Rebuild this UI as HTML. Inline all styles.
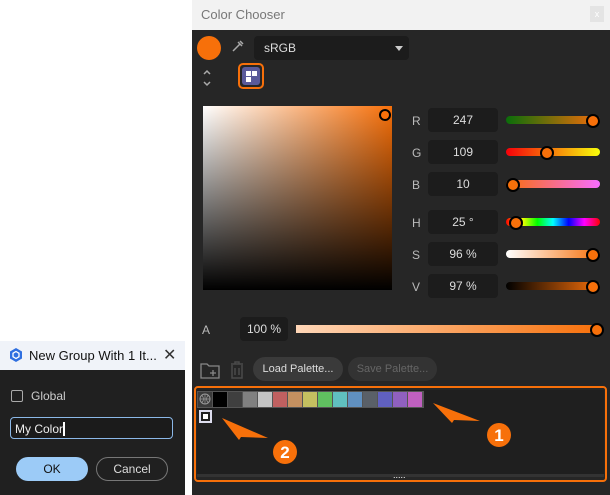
<!DOCTYPE html><html><head><style>
body{margin:0;width:610px;height:495px;background:#fff;position:relative;overflow:hidden;font-family:"Liberation Sans",sans-serif;}
.a{position:absolute}
.in{position:absolute;background:#1c1c1c;border-radius:4px;color:#ddd;font-size:12px;text-align:center;line-height:24px;height:24px}
.lb{position:absolute;color:#bbb;font-size:12px}
.sl{position:absolute;height:8px;border-radius:4px}
.kn{position:absolute;width:10px;height:10px;border-radius:50%;background:#f7700a;border:2px solid #000}
.sw{position:absolute;top:392px;width:14px;height:15px}
</style></head><body>
<div class="a" style="left:192px;top:0;width:418px;height:495px;background:#262626"></div>
<div class="a" style="left:192px;top:0;width:418px;height:30px;background:#f2f2f2;color:#777;font-size:13px;line-height:30px;text-indent:9px">Color Chooser</div>
<div class="a" style="left:590px;top:6px;width:14px;height:16px;background:#e4e4e4;color:#fff;font-size:9px;text-align:center;line-height:16px">x</div>
<div class="a" style="left:197px;top:36px;width:24px;height:24px;border-radius:50%;background:#f7700a"></div>
<svg class="a" style="left:230px;top:38px" width="16" height="16"><path d="M3 13 L10 6 M8 4 L12 8 M10 3 L13 6" stroke="#aaa" stroke-width="1.5" fill="none"/></svg>
<div class="a" style="left:254px;top:36px;width:155px;height:24px;background:#1c1c1c;border-radius:4px;color:#ddd;font-size:12px;line-height:24px;text-indent:10px">sRGB</div>
<div class="a" style="left:395px;top:46px;border:4px solid transparent;border-top:5px solid #ccc"></div>
<svg class="a" style="left:201px;top:69px" width="12" height="18"><path d="M3 5 L6 2 L9 5 M3 13 L6 16 L9 13" stroke="#aaa" stroke-width="1.5" fill="none"/></svg>
<div class="a" style="left:238px;top:63px;width:26px;height:26px;border:2px solid #f7700a;border-radius:5px;box-sizing:border-box"></div>
<div class="a" style="left:242px;top:67px;width:18px;height:18px;background:#5a5a9a;border-radius:3px"></div>
<div class="a" style="left:246px;top:71px;width:5px;height:5px;background:#fff"></div><div class="a" style="left:252px;top:71px;width:5px;height:5px;background:#fff"></div><div class="a" style="left:246px;top:77px;width:5px;height:5px;background:#fff"></div>
<div class="a" style="left:203px;top:106px;width:189px;height:184px;background:linear-gradient(to bottom,transparent,#000),linear-gradient(to right,#fff,#f7700a)"></div>
<div class="a" style="left:379px;top:109px;width:8px;height:8px;border-radius:50%;border:2px solid #000;background:#f7700a"></div>
<div class="lb" style="left:412px;top:114px">R</div><div class="in" style="left:428px;top:108px;width:70px">247</div>
<div class="sl" style="left:506px;top:116px;width:94px;background:linear-gradient(to right,#0a6d0a,#f76d0a)"></div><div class="kn" style="left:586px;top:114px"></div>
<div class="lb" style="left:412px;top:146px">G</div><div class="in" style="left:428px;top:140px;width:70px">109</div>
<div class="sl" style="left:506px;top:148px;width:94px;background:linear-gradient(to right,#f7000a,#f7ff0a)"></div><div class="kn" style="left:540px;top:146px"></div>
<div class="lb" style="left:412px;top:178px">B</div><div class="in" style="left:428px;top:172px;width:70px">10</div>
<div class="sl" style="left:506px;top:180px;width:94px;background:linear-gradient(to right,#f76d0a,#f76dff)"></div><div class="kn" style="left:506px;top:178px"></div>
<div class="lb" style="left:412px;top:216px">H</div><div class="in" style="left:428px;top:210px;width:70px">25 °</div>
<div class="sl" style="left:506px;top:218px;width:94px;background:linear-gradient(to right,red,#ff0,#0f0,#0ff,#00f,#f0f,red)"></div><div class="kn" style="left:509px;top:216px"></div>
<div class="lb" style="left:412px;top:248px">S</div><div class="in" style="left:428px;top:242px;width:70px">96 %</div>
<div class="sl" style="left:506px;top:250px;width:94px;background:linear-gradient(to right,#fff,#f7700a)"></div><div class="kn" style="left:586px;top:248px"></div>
<div class="lb" style="left:412px;top:280px">V</div><div class="in" style="left:428px;top:274px;width:70px">97 %</div>
<div class="sl" style="left:506px;top:282px;width:94px;background:linear-gradient(to right,#000,#f7700a)"></div><div class="kn" style="left:586px;top:280px"></div>
<div class="lb" style="left:202px;top:323px">A</div><div class="in" style="left:240px;top:317px;width:48px">100 %</div>
<div class="sl" style="left:296px;top:325px;width:304px;border-radius:0;background:linear-gradient(to right,#ffd7b8,#f7700a)"></div><div class="kn" style="left:590px;top:323px"></div>
<svg class="a" style="left:199px;top:360px" width="22" height="20"><path d="M2 4 H8 L10 6 H20 V18 H2 Z" stroke="#888" stroke-width="1.3" fill="none"/><path d="M14 10 V16 M11 13 H17" stroke="#888" stroke-width="1.3"/></svg>
<svg class="a" style="left:229px;top:361px" width="16" height="18"><path d="M2 3 H14 M6 3 V1 H10 V3 M3 4 V17 H13 V4 M6 7 V14 M10 7 V14" stroke="#4a4a4a" stroke-width="1.5" fill="none"/></svg>
<div class="a" style="left:253px;top:357px;width:90px;height:24px;border-radius:12px;background:#3a3a3a;color:#ddd;font-size:11px;line-height:24px;text-align:center">Load Palette...</div>
<div class="a" style="left:348px;top:357px;width:89px;height:24px;border-radius:12px;background:#333;color:#666;font-size:11px;line-height:24px;text-align:center">Save Palette...</div>
<div class="a" style="left:194px;top:386px;width:413px;height:96px;border:2px solid #f7700a;border-radius:4px;box-sizing:border-box"></div>
<div class="a" style="left:197px;top:390px;width:407px;height:85px;background:#1f1f1f"></div>
<div class="a" style="left:197px;top:474px;width:407px;height:3px;background:#333"></div>
<div class="a" style="left:393px;top:470px;color:#fff;font-size:9px;letter-spacing:0px">.....</div>
<div class="a" style="left:197px;top:391px;width:227px;height:17px;background:#555"></div>
<div class="sw" style="left:198px;background:#3a3a3a"></div>
<svg class="a" style="left:199px;top:393px" width="12" height="12"><circle cx="6" cy="6" r="5" stroke="#999" fill="none"/><path d="M1 6H11M6 1V11M3 2.5Q6 6 3 9.5M9 2.5Q6 6 9 9.5" stroke="#999" fill="none" stroke-width=".7"/></svg>
<div class="sw" style="left:213px;background:#000"></div><div class="sw" style="left:228px;background:#3f3f3f"></div><div class="sw" style="left:243px;background:#808080"></div><div class="sw" style="left:258px;background:#c4c4c4"></div><div class="sw" style="left:273px;background:#c06060"></div><div class="sw" style="left:288px;background:#c49060"></div><div class="sw" style="left:303px;background:#c4c060"></div><div class="sw" style="left:318px;background:#60c060"></div><div class="sw" style="left:333px;background:#60c0c0"></div><div class="sw" style="left:348px;background:#6090c0"></div><div class="sw" style="left:363px;background:#5a6068"></div><div class="sw" style="left:378px;background:#6060c0"></div><div class="sw" style="left:393px;background:#9060c0"></div><div class="sw" style="left:408px;background:#c060c0"></div>
<div class="a" style="left:199px;top:410px;width:9px;height:9px;border:2px solid #dde;"></div><div class="a" style="left:203px;top:414px;width:5px;height:5px;background:#fff"></div>
<svg class="a" style="left:220px;top:395px" width="300" height="70"><path d="M213 8 L260 26 L234 25 L232 28 Z M2 23 L48 43 L21 42 L19 45 Z" fill="#f7700a"/><circle cx="279" cy="40" r="12" fill="#f7700a"/><circle cx="65" cy="57" r="12" fill="#f7700a"/><text x="279" y="46" fill="#fff" font-size="17" font-weight="bold" text-anchor="middle" font-family="Liberation Sans">1</text><text x="65" y="63" fill="#fff" font-size="17" font-weight="bold" text-anchor="middle" font-family="Liberation Sans">2</text></svg>
<div class="a" style="left:0;top:341px;width:185px;height:154px;background:#202020"></div>
<div class="a" style="left:0;top:341px;width:185px;height:29px;background:#f0f3f9;color:#111;font-size:13px;line-height:29px;text-indent:29px">New Group With 1 It...</div>
<div class="a" style="left:163px;top:341px;font-size:16px;line-height:29px;color:#333">✕</div>
<svg class="a" style="left:8px;top:347px" width="16" height="16"><path d="M8 1 L14 4.5 V11.5 L8 15 L2 11.5 V4.5 Z" fill="#2f6fe0"/><path d="M8 4.5 L11 6.3 V9.7 L8 11.5 L5 9.7 V6.3 Z" fill="none" stroke="#fff" stroke-width="1.3"/></svg>
<div class="a" style="left:11px;top:390px;width:10px;height:10px;border:1.5px solid #aaa;border-radius:2px"></div>
<div class="a" style="left:31px;top:389px;color:#ccc;font-size:12px">Global</div>
<div class="a" style="left:10px;top:417px;width:163px;height:22px;border:1px solid #8bb8e8;border-radius:4px;background:#1b1b1b;color:#eee;font-size:12px;line-height:22px;text-indent:4px;box-sizing:border-box">My Colo<span style="border-right:2px solid #fff">r</span></div>
<div class="a" style="left:16px;top:457px;width:72px;height:24px;border-radius:12px;background:#9ccbf7;color:#111;font-size:12px;line-height:24px;text-align:center">OK</div>
<div class="a" style="left:96px;top:457px;width:72px;height:24px;border-radius:12px;border:1px solid #777;box-sizing:border-box;color:#ddd;font-size:12px;line-height:22px;text-align:center">Cancel</div>
</body></html>
